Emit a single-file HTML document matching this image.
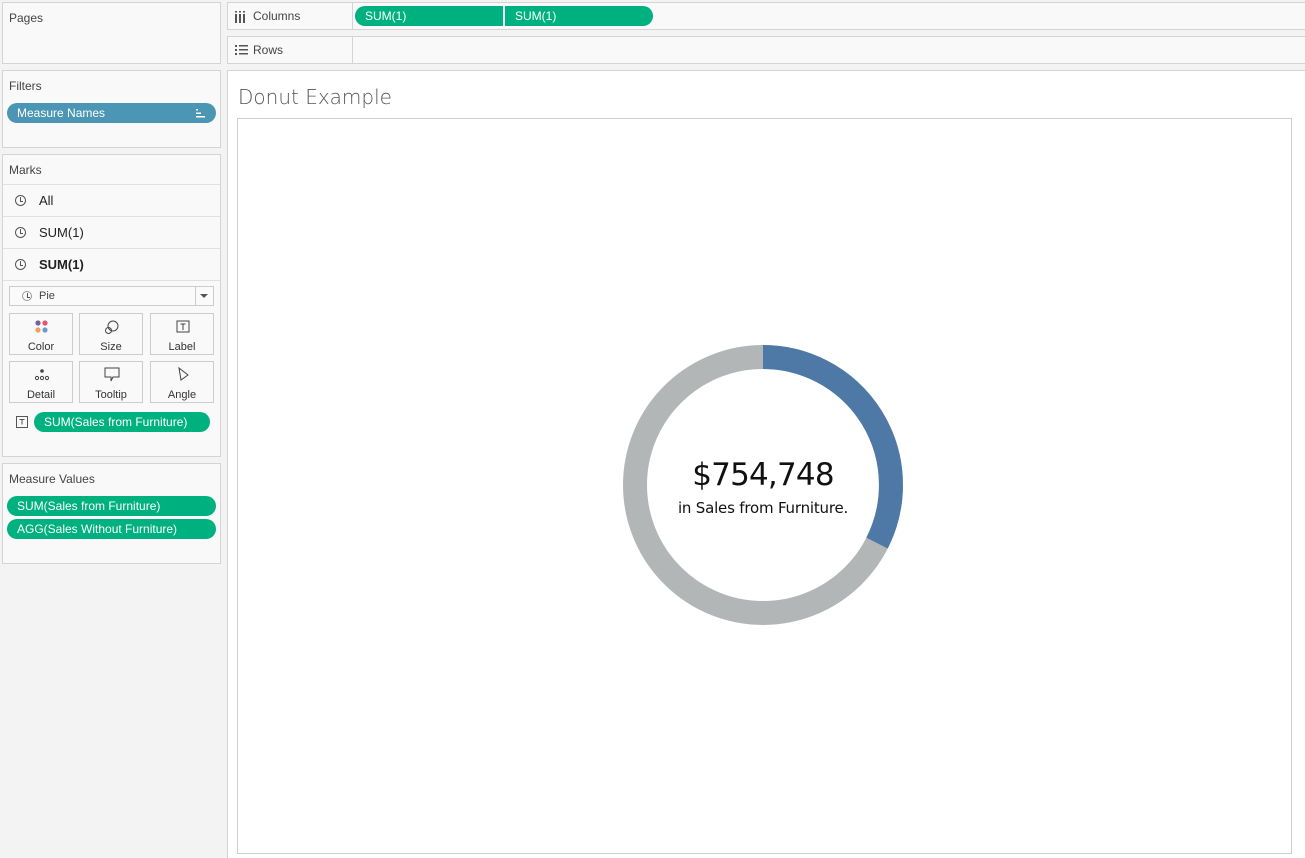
<!DOCTYPE html>
<html><head><meta charset="utf-8"><style>
*{box-sizing:border-box;margin:0;padding:0}
body{width:1305px;height:858px;background:#f3f3f3;font-family:"Liberation Sans",sans-serif;font-size:12px;color:#333;position:relative;overflow:hidden}
.box{position:absolute;background:#f9f9f9;border:1px solid #d4d4d4}
.lbl{position:absolute;font-size:12px;color:#444}
.pill{position:absolute;height:20px;border-radius:10px;color:#fff;font-size:12px;line-height:20px;padding-left:10px}
.g{background:#00b180}
.row{position:absolute;left:0;width:217px;height:32px;border-top:1px solid #e0e0e0}
.row span{position:absolute;left:36px;top:8px;font-size:13px;color:#222}
.clk{position:absolute;left:12px;top:10px;width:11px;height:11px;border:1px solid #555;border-radius:50%}
.clk:after{content:"";position:absolute;left:4px;top:1px;width:2px;height:4px;border-left:1px solid #555;border-bottom:1px solid #555}
.btn{position:absolute;width:64px;height:42px;border:1px solid #ccc;background:#f9f9f9;text-align:center;font-size:11px;color:#333}
.btn b{font-weight:normal;position:absolute;left:0;right:0;top:27px}
</style></head><body>
<div class="box" style="left:2px;top:2px;width:219px;height:62px"><div class="lbl" style="left:6px;top:8px">Pages</div></div>
<div class="box" style="left:2px;top:70px;width:219px;height:78px"><div class="lbl" style="left:6px;top:8px">Filters</div>
<div class="pill" style="left:4px;top:32px;width:209px;background:#4a96b4;font-size:12px">Measure Names<svg style="position:absolute;right:10px;top:6px" width="10" height="9"><rect x="0" y="0" width="2" height="1.5" fill="#fff"/><rect x="0" y="3.5" width="5" height="1.5" fill="#fff"/><rect x="0" y="7" width="9" height="1.5" fill="#fff"/></svg></div></div>
<div class="box" style="left:2px;top:154px;width:219px;height:303px"><div class="lbl" style="left:6px;top:8px">Marks</div>
<div class="row" style="top:29px"><div class="clk"></div><span>All</span></div>
<div class="row" style="top:61px"><div class="clk"></div><span>SUM(1)</span></div>
<div class="row" style="top:93px"><div class="clk"></div><span style="font-weight:bold">SUM(1)</span></div>
<div style="position:absolute;left:0;width:217px;top:125px;border-top:1px solid #e0e0e0"></div>
<div style="position:absolute;left:6px;top:131px;width:205px;height:20px;border:1px solid #ccc;background:#fafafa"><div class="clk" style="left:12px;top:4px;width:10px;height:10px;border-color:#999"></div><span style="position:absolute;left:29px;top:3px;font-size:11px;color:#444">Pie</span><div style="position:absolute;right:0;top:0;width:18px;height:18px;border-left:1px solid #ccc"></div><div style="position:absolute;right:5px;top:7px;border:4px solid transparent;border-top:4px solid #555"></div></div>
<div class="btn" style="left:6px;top:158px"><svg style="position:absolute;left:25px;top:6px" width="14" height="14"><circle cx="3" cy="3" r="2.6" fill="#7b5f9b"/><circle cx="10" cy="3" r="2.6" fill="#e4576b"/><circle cx="3" cy="10" r="2.6" fill="#f0a060"/><circle cx="10" cy="10" r="2.6" fill="#6f9ad0"/></svg><b>Color</b></div>
<div class="btn" style="left:76px;top:158px"><svg style="position:absolute;left:24px;top:5px" width="16" height="16" fill="none" stroke="#444"><circle cx="9" cy="7" r="5"/><circle cx="4.5" cy="11.5" r="3"/></svg><b>Size</b></div>
<div class="btn" style="left:147px;top:158px"><svg style="position:absolute;left:25px;top:6px" width="14" height="14" fill="none" stroke="#444"><rect x="1" y="1" width="12" height="11"/><path d="M4.5 4h5M7 4v6"/></svg><b>Label</b></div>
<div class="btn" style="left:6px;top:206px"><svg style="position:absolute;left:24px;top:6px" width="16" height="14" fill="none" stroke="#444"><circle cx="8" cy="3" r="1.3" fill="#444"/><circle cx="3" cy="10" r="1.6"/><circle cx="8" cy="10" r="1.6"/><circle cx="13" cy="10" r="1.6"/></svg><b>Detail</b></div>
<div class="btn" style="left:76px;top:206px"><svg style="position:absolute;left:24px;top:5px" width="16" height="16" fill="none" stroke="#444"><path d="M1 1h14v9H9l-2 4v-4H1z"/></svg><b>Tooltip</b></div>
<div class="btn" style="left:147px;top:206px"><svg style="position:absolute;left:25px;top:5px" width="14" height="16" fill="none" stroke="#444"><path d="M3 1l9 7-7 5z"/></svg><b>Angle</b></div>
<svg style="position:absolute;left:13px;top:261px" width="13" height="13" fill="none" stroke="#555"><rect x=".5" y=".5" width="11" height="11"/><path d="M3.5 3.5h5M6 3.5v5"/></svg>
<div class="pill g" style="left:31px;top:257px;width:176px">SUM(Sales from Furniture)</div>
</div>
<div class="box" style="left:2px;top:463px;width:219px;height:101px"><div class="lbl" style="left:6px;top:8px">Measure Values</div>
<div class="pill g" style="left:4px;top:32px;width:209px">SUM(Sales from Furniture)</div>
<div class="pill g" style="left:4px;top:55px;width:209px">AGG(Sales Without Furniture)</div></div>

<div class="box" style="left:227px;top:2px;width:1080px;height:28px"><div style="position:absolute;left:124px;top:0;height:26px;border-left:1px solid #d4d4d4"></div>
<svg style="position:absolute;left:7px;top:8px" width="12" height="12" fill="#555"><rect x="0" y="3" width="2" height="9"/><rect x="4" y="3" width="2" height="9"/><rect x="8" y="3" width="2" height="9"/><rect x="0" y="0" width="2" height="1.5"/><rect x="4" y="0" width="2" height="1.5"/><rect x="8" y="0" width="2" height="1.5"/></svg>
<div class="lbl" style="left:25px;top:6px">Columns</div>
<div class="pill g" style="left:127px;top:3px;width:148px;border-radius:10px 0 0 10px">SUM(1)</div>
<div class="pill g" style="left:277px;top:3px;width:148px;border-radius:0 10px 10px 0">SUM(1)</div></div>
<div class="box" style="left:227px;top:36px;width:1080px;height:28px"><div style="position:absolute;left:124px;top:0;height:26px;border-left:1px solid #d4d4d4"></div>
<svg style="position:absolute;left:7px;top:8px" width="13" height="10" fill="#555"><rect x="0" y="0" width="2" height="2"/><rect x="0" y="4" width="2" height="2"/><rect x="0" y="8" width="2" height="2"/><rect x="4" y="0" width="9" height="1.5"/><rect x="4" y="4" width="9" height="1.5"/><rect x="4" y="8" width="9" height="1.5"/></svg>
<div class="lbl" style="left:25px;top:6px">Rows</div></div>

<div style="position:absolute;left:227px;top:70px;width:1078px;height:788px;background:#fff;border:1px solid #d4d4d4;border-right:none;border-bottom:none">
<div style="position:absolute;left:10px;top:14px;font-size:20px;color:#555;font-family:'DejaVu Sans','Liberation Sans',sans-serif;font-weight:200">Donut Example</div>
<div style="position:absolute;left:9px;top:47px;width:1055px;height:736px;border:1px solid #cfcfcf"></div>
</div>
<svg style="position:absolute;left:0;top:0" width="1305" height="858">
<circle cx="763" cy="485" r="128" fill="none" stroke="#b3b6b7" stroke-width="24"/>
<path d="M763 357 A128 128 0 0 1 877 543.1" fill="none" stroke="#4e79a7" stroke-width="24"/>
</svg>
<div style="position:absolute;left:613px;top:457px;width:300px;text-align:center;font-size:31px;color:#111;font-family:'DejaVu Sans',sans-serif;letter-spacing:-0.8px">$754,748</div>
<div style="position:absolute;left:613px;top:499px;width:300px;text-align:center;font-size:15px;color:#111;font-family:'DejaVu Sans',sans-serif;letter-spacing:-0.2px">in Sales from Furniture.</div>
</body></html>
